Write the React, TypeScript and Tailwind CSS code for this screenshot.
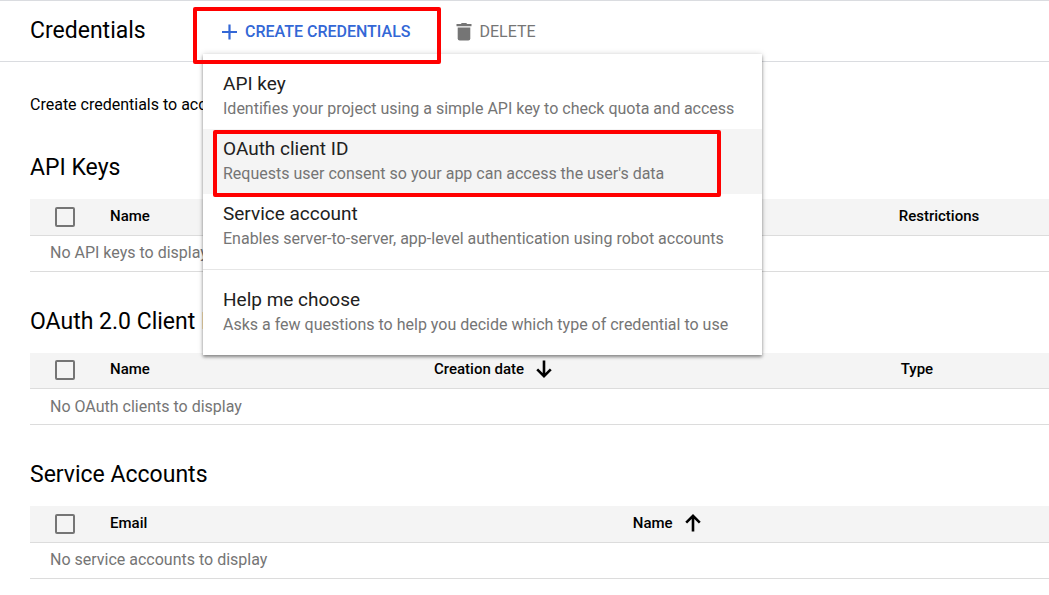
import type { ReactNode } from "react";

function PlusIcon() {
  return (
    <svg className="size-4 shrink-0" viewBox="0 0 16 16" fill="none" stroke="currentColor" strokeWidth="2.2" aria-hidden="true">
      <path d="M8.5 0.5v15M1 8h15" />
    </svg>
  );
}

function TrashIcon() {
  return (
    <svg className="h-[18px] w-4 shrink-0" viewBox="0 0 16 18" fill="currentColor" aria-hidden="true">
      <path d="M0.5 1h4.3l1-1h4.4l1 1h4.3v2.2H0.5z" />
      <path d="M1.7 4.5h12.6v11a2 2 0 0 1-2 2H3.7a2 2 0 0 1-2-2z" />
    </svg>
  );
}

function SortArrow({ down = false }: { down?: boolean }) {
  return (
    <svg
      className={down ? "h-[18px] w-4 shrink-0 rotate-180" : "h-[18px] w-4 shrink-0"}
      viewBox="0 0 16 18"
      fill="none"
      stroke="currentColor"
      strokeWidth="2.6"
      aria-hidden="true"
    >
      <path d="M8 17.5V2M1.2 8.6L8 1.9l6.8 6.7" />
    </svg>
  );
}

function MenuItem({ title, text, active = false }: { title: string; text: string; active?: boolean }) {
  return (
    <button
      type="button"
      role="menuitem"
      className={
        active
          ? "relative block h-[65px] w-full bg-[#f4f4f4] px-5 pb-[2px] text-left"
          : "relative block h-[65px] w-full px-5 pb-[2px] text-left hover:bg-[#f4f4f4]"
      }
    >
      <span className="block text-[19px] leading-[25px] text-[#212121]">{title}</span>
      <span className="block whitespace-nowrap text-[16px] leading-[25px] text-[#757575]">{text}</span>
      {active && (
        <span className="pointer-events-none absolute -bottom-[3px] left-[10px] right-[41px] top-px rounded-[2px] border-4 border-[#ff0000]" />
      )}
    </button>
  );
}

type Column = { label: string; width: string; sort?: "up" | "down" };

function CredentialTable({ title, columns, empty }: { title: string; columns: Column[]; empty: ReactNode }) {
  return (
    <section>
      <h2 className="mb-[15px] text-[23px] leading-[32px]">{title}</h2>
      <table className="w-full table-fixed border-collapse">
        <colgroup>
          <col className="w-20" />
          {columns.map((c) => (
            <col key={c.label} className={c.width} />
          ))}
        </colgroup>
        <thead>
          <tr className="h-9 border-b border-[#dcdcdc] bg-[#f4f4f4]">
            <th scope="col" className="p-0 pl-[25px] text-left">
              <input
                type="checkbox"
                aria-label={`Select all: ${title}`}
                className="block size-5 appearance-none rounded-[2px] border-2 border-[#757575] checked:bg-[#757575]"
              />
            </th>
            {columns.map((c) => (
              <th key={c.label} scope="col" className="p-0 pb-[2px] text-left text-[15px] font-medium leading-5">
                <span className="flex items-center gap-3">
                  {c.label}
                  {c.sort && <SortArrow down={c.sort === "down"} />}
                </span>
              </th>
            ))}
          </tr>
        </thead>
        <tbody>
          <tr className="h-9 border-b border-[#dcdcdc]">
            <td colSpan={columns.length + 1} className="p-0 pl-5 text-[16px] leading-5 text-[#757575]">
              {empty}
            </td>
          </tr>
        </tbody>
      </table>
    </section>
  );
}

export default function App() {
  return (
    <div className="min-h-screen overflow-x-hidden bg-white font-[Roboto,sans-serif] text-black">
      <header className="flex h-[62px] items-center border-y border-[#dadce0] pl-[30px]">
        <h1 className="w-[173px] text-[23px] leading-[32px]">Credentials</h1>
        <div className="relative flex h-full items-center">
          <button
            type="button"
            aria-haspopup="menu"
            aria-expanded="true"
            className="flex items-center gap-2 whitespace-nowrap pl-[18px] pt-[2px] text-[16px] font-medium leading-5 text-[#3367d6]"
          >
            <PlusIcon />
            CREATE CREDENTIALS
          </button>
          <div
            role="menu"
            className="absolute left-0 top-[53px] z-10 w-[559px] bg-white pt-[10px] shadow-[0_2px_3px_rgba(0,0,0,0.4),0_0_6px_rgba(0,0,0,0.15)]"
          >
            <MenuItem title="API key" text="Identifies your project using a simple API key to check quota and access" />
            <MenuItem active title="OAuth client ID" text="Requests user consent so your app can access the user's data" />
            <MenuItem title="Service account" text="Enables server-to-server, app-level authentication using robot accounts" />
            <div className="mt-[10px] border-t border-[#e6e6e6] py-[10px]">
              <MenuItem title="Help me choose" text="Asks a few questions to help you decide which type of credential to use" />
            </div>
          </div>
          <span className="pointer-events-none absolute -left-[10px] -right-[31px] -bottom-[3px] top-[6px] z-20 rounded-[2px] border-4 border-[#ff0000]" />
        </div>
        <button
          type="button"
          className="ml-[46px] flex items-center gap-[7px] pt-[2px] text-[16px] leading-5 text-[#757575]"
        >
          <TrashIcon />
          DELETE
        </button>
      </header>
      <main className="flex flex-col gap-[34px] pl-[30px] pt-[33px]">
        <p className="mb-[3px] whitespace-nowrap text-[16px] leading-5">Create credentials to access your enabled APIs</p>
        <CredentialTable
          title="API Keys"
          columns={[
            { label: "Name", width: "w-[77.4%]" },
            { label: "Restrictions", width: "w-auto" },
          ]}
          empty="No API keys to display"
        />
        <CredentialTable
          title="OAuth 2.0 Client IDs"
          columns={[
            { label: "Name", width: "w-[31.8%]" },
            { label: "Creation date", width: "w-[45.8%]", sort: "down" },
            { label: "Type", width: "w-auto" },
          ]}
          empty="No OAuth clients to display"
        />
        <CredentialTable
          title="Service Accounts"
          columns={[
            { label: "Email", width: "w-[51.3%]" },
            { label: "Name", width: "w-auto", sort: "up" },
          ]}
          empty="No service accounts to display"
        />
      </main>
    </div>
  );
}
